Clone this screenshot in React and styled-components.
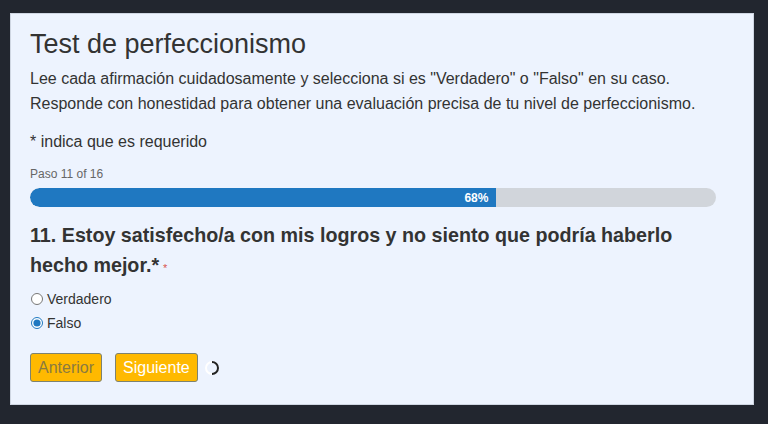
import React from "react";
import styled, { createGlobalStyle } from "styled-components";

const GlobalStyle = createGlobalStyle`
  html, body {
    margin: 0;
    padding: 0;
    background: #22262f;
  }
  body {
    font-family: "Liberation Sans", Arial, sans-serif;
    color: #333;
  }
`;

const Page = styled.div`
  padding: 13px 14px 19px 10px;
  min-height: 424px;
  box-sizing: border-box;
`;

const Card = styled.form`
  background: #edf3fe;
  border: 1px solid #cfd6e2;
  padding: 14px 37px 0 19px;
  height: 392px;
  box-sizing: border-box;
`;

const Title = styled.h1`
  margin: 0;
  font-size: 27px;
  font-weight: 400;
  line-height: 32px;
  color: #333;
`;

const Lead = styled.p`
  margin: ${p => p.top || 0}px 0 0;
  font-size: 16px;
  line-height: 25px;
  color: #333;
`;

const StepLabel = styled.div`
  margin-top: 12px;
  font-size: 12px;
  line-height: 16px;
  color: #666;
`;

const Track = styled.div`
  margin-top: 6px;
  height: 19px;
  border-radius: 10px;
  background: #d1d5db;
  overflow: hidden;
  display: flex;
`;

const Fill = styled.div`
  height: 100%;
  background: #1f78c1;
  border-radius: 10px 0 0 10px;
  display: flex;
  align-items: center;
  justify-content: flex-end;
  padding-right: 8px;
  box-sizing: border-box;
  color: #fff;
  font-size: 12px;
  font-weight: 700;
`;

const Question = styled.h2`
  margin: 13px 0 0;
  font-size: 19.7px;
  font-weight: 700;
  line-height: 30px;
  color: #333;
`;

const Required = styled.span`
  color: #d9534f;
  font-size: 11px;
  font-weight: 400;
  margin-left: 4px;
`;

const Options = styled.div`
  margin-top: 4px;
  display: flex;
  flex-direction: column;
`;

const Option = styled.label`
  display: flex;
  align-items: center;
  gap: 4px;
  height: 24px;
  font-size: 14px;
  color: #333;
`;

const Radio = styled.input`
  width: 12px;
  height: 12px;
  margin: 0 0 0 1px;
  accent-color: #1f78c1;
`;

const Actions = styled.div`
  margin-top: 18px;
  display: flex;
  align-items: center;
  gap: 13px;
`;

const Button = styled.button`
  height: 29px;
  padding: 0 7px;
  font-family: "Liberation Sans", Arial, sans-serif;
  font-size: 16px;
  background: #ffb900;
  border: 1px solid #7d8270;
  border-radius: 3px;
  color: ${p => (p.muted ? "#8a7a40" : "#fff")};
  cursor: pointer;
`;

const Spinner = styled.svg`
  margin-left: -7px;
`;

export default function App() {
  const pct = 68;
  return (
    <>
      <GlobalStyle />
      <Page>
        <Card onSubmit={e => e.preventDefault()}>
          <Title>Test de perfeccionismo</Title>
          <Lead top={6}>
            Lee cada afirmación cuidadosamente y selecciona si es "Verdadero" o "Falso" en su caso.
            <br />
            Responde con honestidad para obtener una evaluación precisa de tu nivel de perfeccionismo.
          </Lead>
          <Lead top={13}>* indica que es requerido</Lead>
          <StepLabel>Paso 11 of 16</StepLabel>
          <Track>
            <Fill style={{ width: pct + "%" }}>{pct}%</Fill>
          </Track>
          <Question>
            11. Estoy satisfecho/a con mis logros y no siento que podría haberlo hecho mejor.*
            <Required>*</Required>
          </Question>
          <Options>
            <Option>
              <Radio type="radio" name="q11" value="v" />
              Verdadero
            </Option>
            <Option>
              <Radio type="radio" name="q11" value="f" defaultChecked />
              Falso
            </Option>
          </Options>
          <Actions>
            <Button type="button" muted>Anterior</Button>
            <Button type="submit">Siguiente</Button>
            <Spinner width="16" height="16" viewBox="0 0 16 16">
              <circle cx="8" cy="8" r="6" fill="none" stroke="#fff" strokeWidth="2" />
              <path d="M8 2 A6 6 0 0 1 8 14" fill="none" stroke="#222" strokeWidth="2" />
            </Spinner>
          </Actions>
        </Card>
      </Page>
    </>
  );
}
